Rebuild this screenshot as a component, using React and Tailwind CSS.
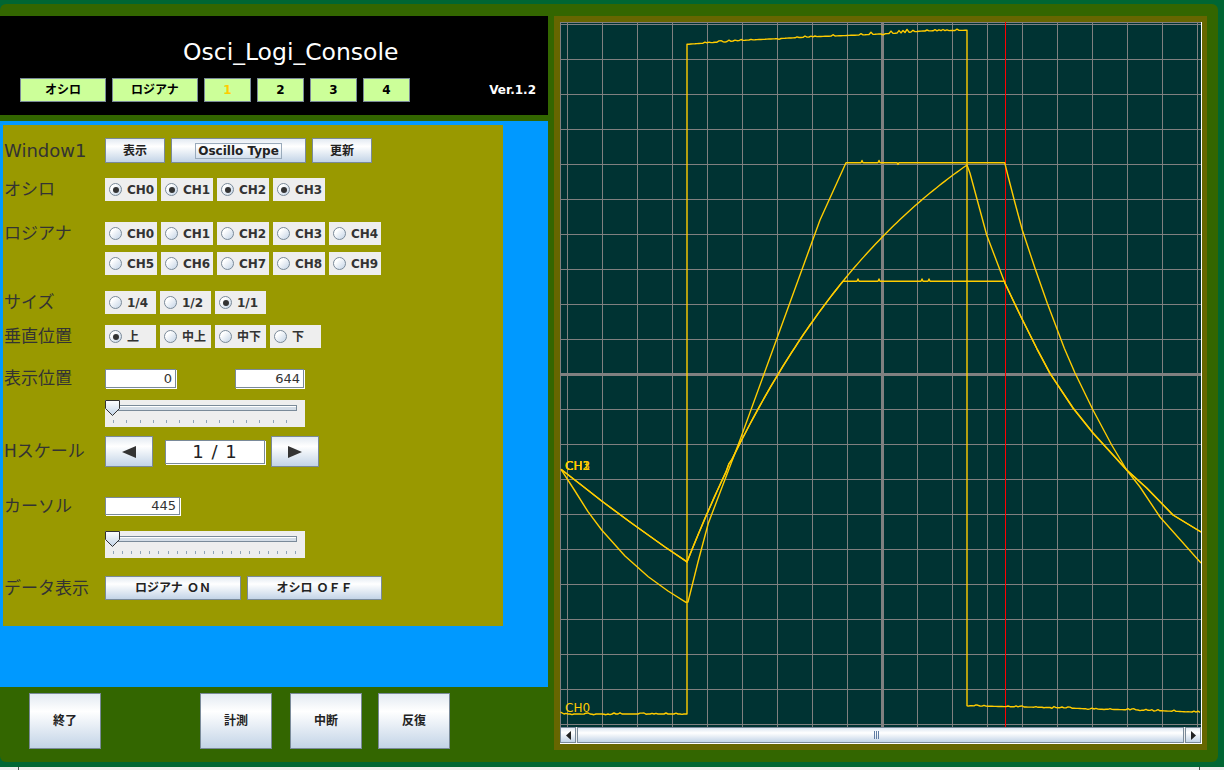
import React from 'react';

const metal =
  'border border-[#7a8a99] bg-[linear-gradient(to_bottom,#e3eaf2_0%,#ffffff_32%,#c3d4e7_100%)]';

// ---- small widgets ----
function TabBtn({ children, w, active }) {
  return (
    <div
      className={`${w} h-[24px] border border-[#7a8a99] bg-[#ccff99] flex items-center justify-center text-[12px] font-bold ${
        active ? 'text-[#ffcc00]' : 'text-black'
      }`}
    >
      {children}
    </div>
  );
}

function Radio({ label, checked, w = 'w-[52px]' }) {
  return (
    <div className={`${w} h-[23px] bg-[#eeeeee] flex items-center pl-[4px] gap-[5px]`}>
      <span className="w-[13px] h-[13px] shrink-0 rounded-full border border-[#7a8a99] bg-[linear-gradient(135deg,#ffffff_25%,#c3d3e5_100%)] flex items-center justify-center">
        {checked && <span className="w-[6px] h-[6px] rounded-full bg-[#333333]" />}
      </span>
      <span className="text-[12px] font-bold text-[#333333] leading-none">{label}</span>
    </div>
  );
}

function Field({ value, w, h = 'h-[19px]' }) {
  return (
    <div
      className={`${w} ${h} bg-white border border-[#7a8a99] shadow-[1px_1px_0_#ffffff] flex items-center justify-end pr-[3px] text-[13px] text-[#333333]`}
    >
      {value}
    </div>
  );
}

function Slider({ ticks, tickWidth }) {
  return (
    <div className="relative w-[200px] h-[27px] bg-[#eeeeee] pl-[8px] pt-[5px]">
      <div className="w-[184px] h-[6px] border border-[#7a8a99] bg-[#d3dce6] shadow-[inset_0_1px_0_#ffffff]" />
      <div className={`${tickWidth} mt-[9px] h-[3px] flex justify-between`}>
        {Array.from({ length: ticks }).map((_, i) => (
          <span key={i} className="w-[1px] h-[3px] bg-[#8fa3b8]" />
        ))}
      </div>
      <svg className="absolute left-0 top-0" width="15" height="16" viewBox="0 0 15 16">
        <defs>
          <linearGradient id="thumbg" x1="0" y1="0" x2="0" y2="1">
            <stop offset="0" stopColor="#ffffff" />
            <stop offset="1" stopColor="#c3d4e7" />
          </linearGradient>
        </defs>
        <polygon points="0.5,0.5 14.5,0.5 14.5,8.5 7.5,15.5 0.5,8.5" fill="url(#thumbg)" stroke="#333333" />
      </svg>
    </div>
  );
}

function Label({ children, cls = 'text-[17px]' }) {
  return <div className={`w-[101px] ${cls} text-[#333333] leading-none`}>{children}</div>;
}

// ---- scope traces ----
const OX = 560;
const OY = 22;

function rand(seed) {
  let s = seed;
  return () => {
    s = (s * 16807) % 2147483647;
    return s / 2147483647;
  };
}

function lerp(pts, x) {
  for (let i = 1; i < pts.length; i++) {
    if (x <= pts[i][0]) {
      const [x0, y0] = pts[i - 1];
      const [x1, y1] = pts[i];
      return y0 + ((y1 - y0) * (x - x0)) / (x1 - x0);
    }
  }
  return pts[pts.length - 1][1];
}

function toPath(pts) {
  return pts
    .map(([x, y], i) => `${i ? 'L' : 'M'}${(x - OX).toFixed(1)} ${(y - OY).toFixed(1)}`)
    .join(' ');
}

function buildTraces() {
  const r = rand(12345);
  const noise = (amp, p = 0.18) => {
    const n = r();
    if (n < p) return -amp * (0.5 + r() * 0.5);
    if (n > 1 - p / 2) return amp * 0.6 * r();
    return 0;
  };

  // CH0 : pulse
  const ch0 = [[560.5, 712]];
  for (let x = 562; x <= 686; x += 2) ch0.push([x, 714 + noise(1.2)]);
  ch0.push([687, 714]);
  const top = [
    [687, 44.3], [699, 43.5], [740, 40.5], [780, 38.5], [820, 36.5],
    [860, 35], [900, 33], [922, 31], [966.7, 30.3],
  ];
  for (let x = 687; x <= 965; x += 2) {
    const amp = x > 870 && x < 925 ? 3 : 1.3;
    ch0.push([x, lerp(top, x) + noise(amp, 0.2)]);
  }
  ch0.push([967, 30.3], [967, 705.7]);
  const bot = [[968, 705.7], [1000, 706.5], [1060, 707.7], [1092, 709], [1140, 710], [1201, 712.3]];
  for (let x = 968; x <= 1200; x += 2) ch0.push([x, lerp(bot, x) + noise(1.2)]);

  // CH1 : trapezoid
  const ch1 = [
    [561, 469.3], [575, 491], [588, 511.7], [601.7, 530], [625, 556], [648.3, 576.7],
    [668, 591], [686, 602.3], [688, 602], [698, 562], [708.3, 523.3], [740, 440],
    [780, 330], [820, 220], [846, 162.7], [861, 162.7], [862, 160.5], [863, 162.7],
    [878, 162.7], [879, 160.5], [880, 162.7], [897, 162.7], [898, 164.5], [899, 162.7],
    [1004.7, 162.7], [1008, 176], [1015, 203], [1022.3, 230], [1035, 268.3], [1047.3, 303.3],
    [1064.3, 348.3], [1075, 373], [1093, 410], [1111.7, 445], [1126.7, 470], [1140, 487],
    [1160, 517], [1201, 563],
  ];

  // CH2 : exponential charge / discharge
  const ch2 = [[561, 469.3], [580, 484], [601.7, 501], [630, 522], [665, 547], [686.7, 561.7]];
  for (let x = 687; x <= 966; x += 3) {
    const y = 562 - 547.7 * (1 - Math.exp(-(x - 687) / 217));
    ch2.push([x, y + (x > 715 && x < 735 ? noise(3, 0.25) : 0)]);
  }
  const fall = [
    [967, 165], [970, 173.3], [986.7, 235], [1005, 283.3], [1021.7, 318.3], [1036.7, 348.3],
    [1050, 373.3], [1073, 408], [1093, 433], [1126.7, 470], [1146.7, 488], [1173, 515], [1201, 532],
  ];
  ch2.push(...fall);

  // CH3 : CH2 clipped at a plateau
  const ch3 = ch2.map(([x, y]) => [x, Math.max(y, 281.3)]);
  const plateau = ch3.filter(([x]) => x < 846 || x > 1004.7);
  const idx = plateau.findIndex(([x]) => x > 1004.7);
  const bumps = [
    [846.7, 281.3], [857, 281.3], [858, 279], [859, 281.3], [878, 281.3], [879, 279],
    [880, 281.3], [921, 281.3], [922, 279], [923, 281.3], [928, 281.3], [929, 279],
    [930, 281.3], [1004.7, 281.3],
  ];
  plateau.splice(idx, 0, ...bumps);

  return [ch0, ch1, ch2, plateau].map(toPath);
}

const TRACES = buildTraces();

function Scope() {
  const W = 641;
  const H = 705;
  const vx = Array.from({ length: 19 }, (_, k) => 7.5 + 35 * k);
  const hy = Array.from({ length: 21 }, (_, k) => 2.5 + 35 * k);
  return (
    <svg width={W} height={H} viewBox={`0 0 ${W} ${H}`} className="block">
      <rect x="0" y="0" width={W} height={H} fill="#003333" />
      <g stroke="#808080" strokeWidth="1" shapeRendering="crispEdges">
        <line x1="0.5" y1="0" x2="0.5" y2={H} />
        <line x1="0" y1="0.5" x2={W} y2="0.5" />
        {vx.map((x) => (
          <line key={'v' + x} x1={x} y1="0" x2={x} y2={H} />
        ))}
        {hy.map((y) => (
          <line key={'h' + y} x1="0" y1={y} x2={W} y2={y} />
        ))}
      </g>
      <g stroke="#808080" strokeWidth="3" shapeRendering="crispEdges">
        <line x1="322" y1="0" x2="322" y2={H} />
        <line x1="0" y1="352" x2={W} y2="352" />
      </g>
      <line x1="445.5" y1="0" x2="445.5" y2={H} stroke="#ff0000" strokeWidth="1" shapeRendering="crispEdges" />
      <g fill="none" stroke="#ffcc00" strokeWidth="1.4" strokeLinejoin="round">
        {TRACES.map((d, i) => (
          <path key={i} d={d} />
        ))}
      </g>
      <g fill="#ffcc00" fontSize="12" fontFamily="DejaVu Sans, sans-serif">
        <text x="5" y="690">CH0</text>
        <text x="5" y="448">CH1</text>
        <text x="5" y="448">CH2</text>
        <text x="5" y="448">CH3</text>
      </g>
    </svg>
  );
}

function ScrollBar() {
  return (
    <div className="h-[17px] flex bg-[#eeeeee] border-b border-white">
      <div className={`w-[16px] h-full ${metal} flex items-center justify-center`}>
        <svg width="5" height="9" viewBox="0 0 5 9">
          <polygon points="5,0 0,4.5 5,9" fill="#222222" />
        </svg>
      </div>
      <div className="flex-1 ml-[1px] mr-[1px] h-full border border-[#7a8a99] bg-[linear-gradient(to_bottom,#dce6f1_0%,#ffffff_35%,#c3d4e7_100%)] flex items-center justify-center">
        <div className="flex gap-[1px] -ml-[8px]">
          <span className="w-[1px] h-[8px] bg-[#5f7ca3]" />
          <span className="w-[1px] h-[8px] bg-[#5f7ca3]" />
          <span className="w-[1px] h-[8px] bg-[#5f7ca3]" />
        </div>
      </div>
      <div className={`w-[16px] h-full ${metal} flex items-center justify-center`}>
        <svg width="5" height="9" viewBox="0 0 5 9">
          <polygon points="0,0 5,4.5 0,9" fill="#222222" />
        </svg>
      </div>
    </div>
  );
}

function Triangle({ dir }) {
  return (
    <svg width="14" height="12" viewBox="0 0 14 12">
      <polygon points={dir === 'left' ? '14,0 0,6 14,12' : '0,0 14,6 0,12'} fill="#333333" />
    </svg>
  );
}

export default function App() {
  return (
    <div className="w-[1224px] h-[770px] bg-[#006633] flex flex-col overflow-hidden font-['DejaVu_Sans','Noto_Sans_CJK_JP',sans-serif]">
      <div className="mt-[4px] w-[1218px] h-[758px] shrink-0 bg-[#336600] rounded-[6px] flex">
        {/* left column */}
        <div className="w-[548px] flex flex-col">
          {/* header */}
          <div className="mt-[12px] h-[99px] bg-black pt-[21px]">
            <div className="pl-[183px] h-[30px] leading-[30px] text-[23.5px] text-white">Osci_Logi_Console</div>
            <div className="mt-[11px] flex items-center pl-[20px] pr-[12px] gap-[6px]">
              <TabBtn w="w-[86px]">オシロ</TabBtn>
              <TabBtn w="w-[86px]">ロジアナ</TabBtn>
              <TabBtn w="w-[47px]" active>1</TabBtn>
              <TabBtn w="w-[47px]">2</TabBtn>
              <TabBtn w="w-[47px]">3</TabBtn>
              <TabBtn w="w-[47px]">4</TabBtn>
              <div className="ml-auto text-[12px] font-bold text-white">Ver.1.2</div>
            </div>
          </div>

          {/* control area */}
          <div className="mt-[6px] h-[566px] bg-[#0099ff] pt-[4px] pl-[3px]">
            <div className="w-[500px] h-[501px] bg-[#999900] pl-[1px] flex flex-col">
              <div className="mt-[13px] h-[25px] flex items-center">
                <Label cls="text-[18px]">Window1</Label>
                <div className="flex gap-[6px]">
                  <div className={`w-[60px] h-[25px] ${metal} flex items-center justify-center text-[12px] font-bold text-[#222222]`}>表示</div>
                  <div className={`w-[135px] h-[25px] ${metal} flex items-center justify-center text-[12px] font-bold text-[#222222]`}>
                    <span className="border border-[#99aabb] px-[2px] leading-[14px]">Oscillo Type</span>
                  </div>
                  <div className={`w-[60px] h-[25px] ${metal} flex items-center justify-center text-[12px] font-bold text-[#222222]`}>更新</div>
                </div>
              </div>

              <div className="mt-[15px] h-[23px] flex items-center">
                <Label>オシロ</Label>
                <div className="flex gap-[4px]">
                  {['CH0', 'CH1', 'CH2', 'CH3'].map((c) => (
                    <Radio key={c} label={c} checked />
                  ))}
                </div>
              </div>

              <div className="mt-[21px] flex items-start">
                <div className="h-[23px] flex items-center">
                  <Label>ロジアナ</Label>
                </div>
                <div className="flex flex-col gap-[7px]">
                  <div className="flex gap-[4px]">
                    {['CH0', 'CH1', 'CH2', 'CH3', 'CH4'].map((c) => (
                      <Radio key={c} label={c} />
                    ))}
                  </div>
                  <div className="flex gap-[4px]">
                    {['CH5', 'CH6', 'CH7', 'CH8', 'CH9'].map((c) => (
                      <Radio key={c} label={c} />
                    ))}
                  </div>
                </div>
              </div>

              <div className="mt-[16px] h-[23px] flex items-center">
                <Label>サイズ</Label>
                <div className="flex gap-[4px]">
                  <Radio w="w-[51px]" label="1/4" />
                  <Radio w="w-[51px]" label="1/2" />
                  <Radio w="w-[51px]" label="1/1" checked />
                </div>
              </div>

              <div className="mt-[11px] h-[23px] flex items-center">
                <Label>垂直位置</Label>
                <div className="flex gap-[4px]">
                  <Radio w="w-[51px]" label="上" checked />
                  <Radio w="w-[51px]" label="中上" />
                  <Radio w="w-[51px]" label="中下" />
                  <Radio w="w-[51px]" label="下" />
                </div>
              </div>

              <div className="mt-[21px] h-[19px] flex items-center">
                <Label>表示位置</Label>
                <Field w="w-[71px]" value="0" />
                <div className="ml-[59px]">
                  <Field w="w-[69px]" value="644" />
                </div>
              </div>

              <div className="mt-[12px] flex">
                <div className="w-[101px]" />
                <Slider ticks={14} tickWidth="w-[174px]" />
              </div>

              <div className="mt-[9px] h-[31px] flex items-center">
                <Label>Hスケール</Label>
                <div className={`w-[48px] h-[31px] ${metal} flex items-center justify-center`}>
                  <Triangle dir="left" />
                </div>
                <div className="ml-[12px] w-[100px] h-[24px] bg-white border border-[#7a8a99] shadow-[1px_1px_0_#ffffff] flex items-center justify-center text-[18px] tracking-[1px] text-[#222222]">
                  1 / 1
                </div>
                <div className={`ml-[6px] w-[48px] h-[31px] ${metal} flex items-center justify-center`}>
                  <Triangle dir="right" />
                </div>
              </div>

              <div className="mt-[30px] h-[18px] flex items-center">
                <Label>カーソル</Label>
                <Field w="w-[75px]" h="h-[18px]" value="445" />
              </div>

              <div className="mt-[16px] flex">
                <div className="w-[101px]" />
                <Slider ticks={21} tickWidth="w-[183px]" />
              </div>

              <div className="mt-[18px] h-[24px] flex items-center">
                <Label>データ表示</Label>
                <div className="flex gap-[6px]">
                  <div className={`w-[136px] h-[24px] ${metal} flex items-center justify-center text-[12px] font-bold text-[#222222]`}>ロジアナ ＯＮ</div>
                  <div className={`w-[135px] h-[24px] ${metal} flex items-center justify-center text-[12px] font-bold text-[#222222]`}>オシロ ＯＦＦ</div>
                </div>
              </div>
            </div>
          </div>

          {/* bottom buttons */}
          <div className="h-[75px] pt-[6px] flex items-start pl-[29px]">
            <div className={`w-[72px] h-[56px] ${metal} flex items-center justify-center text-[12px] font-bold text-[#222222]`}>終了</div>
            <div className={`ml-[99px] w-[72px] h-[56px] ${metal} flex items-center justify-center text-[12px] font-bold text-[#222222]`}>計測</div>
            <div className={`ml-[18px] w-[72px] h-[56px] ${metal} flex items-center justify-center text-[12px] font-bold text-[#222222]`}>中断</div>
            <div className={`ml-[16px] w-[72px] h-[56px] ${metal} flex items-center justify-center text-[12px] font-bold text-[#222222]`}>反復</div>
          </div>
        </div>

        {/* scope */}
        <div className="ml-[6px] mt-[12px] w-[653px] h-[734px] bg-[#666600] pt-[6px] pl-[6px]">
          <div className="w-[642px] border-r border-white">
            <Scope />
            <ScrollBar />
          </div>
        </div>
      </div>

      <div className="mt-[5px] h-[3px] bg-[#eeeeee] flex">
        <span className="ml-[18px] w-[1px] h-[3px] bg-[#555555]" />
        <span className="ml-[1180px] w-[1px] h-[3px] bg-[#555555]" />
      </div>
    </div>
  );
}
